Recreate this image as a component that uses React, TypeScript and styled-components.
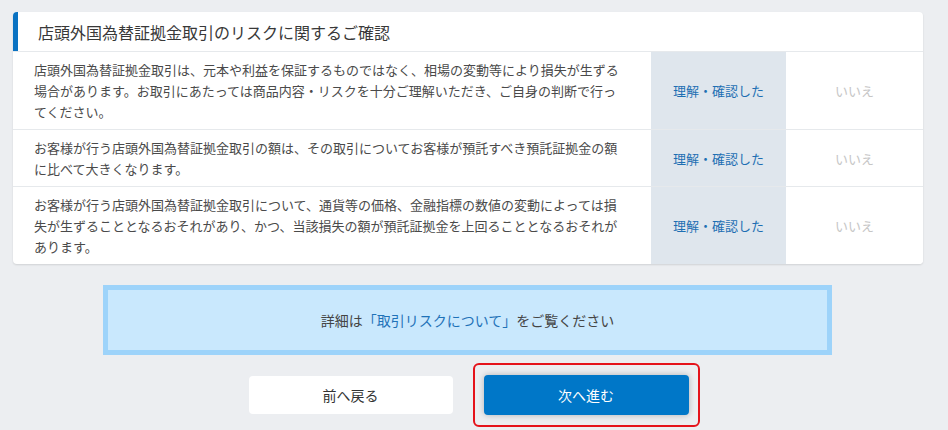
import styled, { createGlobalStyle } from "styled-components"


const GlobalStyle = createGlobalStyle`
    html, body {
        margin: 0;
        padding: 0;
        background-color: #eceef1;
    }
    body {
        font-family: "Noto Sans CJK JP", "Noto Sans", sans-serif;
        color: #4a4a4a;
    }
`

interface IRisk {
    text: string
}

const risks: IRisk[] = [
    { text: '店頭外国為替証拠金取引は、元本や利益を保証するものではなく、相場の変動等により損失が生ずる場合があります。お取引にあたっては商品内容・リスクを十分ご理解いただき、ご自身の判断で行ってください。' },
    { text: 'お客様が行う店頭外国為替証拠金取引の額は、その取引についてお客様が預託すべき預託証拠金の額に比べて大きくなります。' },
    { text: 'お客様が行う店頭外国為替証拠金取引について、通貨等の価格、金融指標の数値の変動によっては損失が生ずることとなるおそれがあり、かつ、当該損失の額が預託証拠金を上回ることとなるおそれがあります。' },
]


export default function App() {
    return (
        <>
            <GlobalStyle />
            <Page>
                <Content>
                    <Card>
                        <CardHeader>
                            <h1>店頭外国為替証拠金取引のリスクに関するご確認</h1>
                        </CardHeader>
                        {risks.map((risk, index) => (
                            <Row key={index}>
                                <RiskText>{risk.text}</RiskText>
                                <Choice selected>理解・確認した</Choice>
                                <Choice>いいえ</Choice>
                            </Row>
                        ))}
                    </Card>
                    <InfoBox>
                        詳細は<InfoLink>「取引リスクについて」</InfoLink>をご覧ください
                    </InfoBox>
                </Content>
                <ButtonRow>
                    <BackButton>前へ戻る</BackButton>
                    <Highlight>
                        <NextButton>次へ進む</NextButton>
                    </Highlight>
                </ButtonRow>
            </Page>
        </>
    )
}


const Page = styled.div`
    width: 948px;
    padding-top: 12px;
    display: flex;
    flex-direction: column;
`

const Content = styled.div`
    padding: 0 25px 0 13px;
    display: flex;
    flex-direction: column;
    gap: 21px;
`

const Card = styled.div`
    background-color: #ffffff;
    border-radius: 4px;
    box-shadow: 0 1px 2px rgba(0, 0, 0, 0.12);
    overflow: hidden;
`

const CardHeader = styled.div`
    height: 39px;
    border-left: 5px solid #0a72c2;
    display: flex;
    align-items: center;
    padding-left: 20px;

    h1 {
        margin: 0;
        font-size: 16px;
        font-weight: normal;
        color: #383838;
    }
`

const Row = styled.div`
    display: grid;
    grid-template-columns: 638px 135px 1fr;
    border-top: 1px solid #e6e9ec;
`

const RiskText = styled.div`
    padding: 7px 30px 7px 21px;
    font-size: 13px;
    line-height: 21px;
    color: #4a4a4a;
`

const Choice = styled.div<{ selected?: boolean }>`
    display: flex;
    align-items: center;
    justify-content: center;
    font-size: 13px;
    background-color: ${props => props.selected ? '#dfe6ed' : '#ffffff'};
    color: ${props => props.selected ? '#1d6fb3' : '#c6c6c6'};
`

const InfoBox = styled.div`
    margin: 0 91px 0 90px;
    height: 70px;
    box-sizing: border-box;
    border: 5px solid #9dd3fa;
    background-color: #c9e8fd;
    display: flex;
    align-items: center;
    justify-content: center;
    font-size: 14px;
    color: #444;
`

const InfoLink = styled.span`
    color: #1f72b8;
`

const ButtonRow = styled.div`
    margin-top: 8px;
    display: flex;
    justify-content: center;
    align-items: center;
    gap: 20px;
`

const BackButton = styled.div`
    width: 204px;
    height: 38px;
    background-color: #ffffff;
    border-radius: 4px;
    display: flex;
    align-items: center;
    justify-content: center;
    font-size: 14px;
    color: #333;
`

const Highlight = styled.div`
    border: 2px solid #e5131b;
    border-radius: 6px;
    padding: 10px 9px;
`

const NextButton = styled.div`
    width: 205px;
    height: 40px;
    background-color: #0077c8;
    border-radius: 4px;
    box-shadow: 0 0 6px rgba(0, 0, 0, 0.25);
    display: flex;
    align-items: center;
    justify-content: center;
    font-size: 14px;
    color: #ffffff;
`
